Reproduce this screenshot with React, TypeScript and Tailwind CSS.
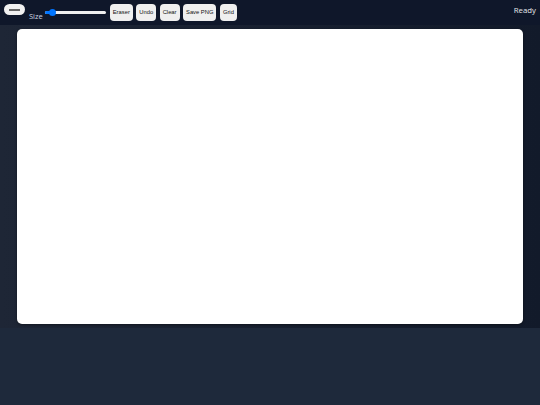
import React from "react";

const tools = ["Eraser", "Undo", "Clear", "Save PNG", "Grid"];

const App = () => {
  return (
    <div className="min-h-[405px] bg-[#1e293b]" style={{ fontFamily: "'Open Sans', sans-serif" }}>
      <div className="flex flex-col h-[328px]">
        {/* Toolbar */}
        <div className="flex items-start h-[25px] bg-[#0f172a] px-1 pt-1">
          <div className="flex items-center justify-center w-[21px] h-[11px] rounded-[6px] bg-[#f1f1f1]">
            <div className="w-[11px] h-[2px] bg-[#666]" />
          </div>
          <span className="ml-1 mt-[7px] text-[7.5px] leading-[10px] text-[#cbd5e1]">Size</span>
          <div className="relative ml-[2px] mt-[6px] w-[61px] h-[5px]">
            <div className="absolute left-0 right-0 top-[1px] h-[3px] rounded-full bg-[#efefef]" />
            <div className="absolute left-0 w-[7px] top-[1px] h-[3px] rounded-l-full bg-[#0075ff]" />
            <div className="absolute left-[4px] -top-[1px] w-[7px] h-[7px] rounded-full bg-[#0075ff]" />
          </div>
          <div className="flex gap-[3.5px] ml-[4px]" style={{ fontFamily: "'Liberation Sans', Arial, sans-serif" }}>
            {tools.map((t) => (
              <button
                key={t}
                className="h-[17px] px-[3px] rounded-[4px] bg-[#efefef] text-[#111] text-[5.8px]"
              >
                {t}
              </button>
            ))}
          </div>
          <span className="ml-auto text-[7.8px] font-medium leading-[10px] mt-[1px] text-[#e5e7eb]">Ready</span>
        </div>

        {/* Canvas area */}
        <div className="flex-1 flex bg-gradient-to-r from-[#1e2636] to-[#121a2a] px-[17px] pt-[4px] pb-[4px]">
          <div className="flex-1 bg-white rounded-[5px] shadow-[0_1px_3px_rgba(0,0,0,0.4)]" />
        </div>
      </div>
    </div>
  );
};

export default App;
